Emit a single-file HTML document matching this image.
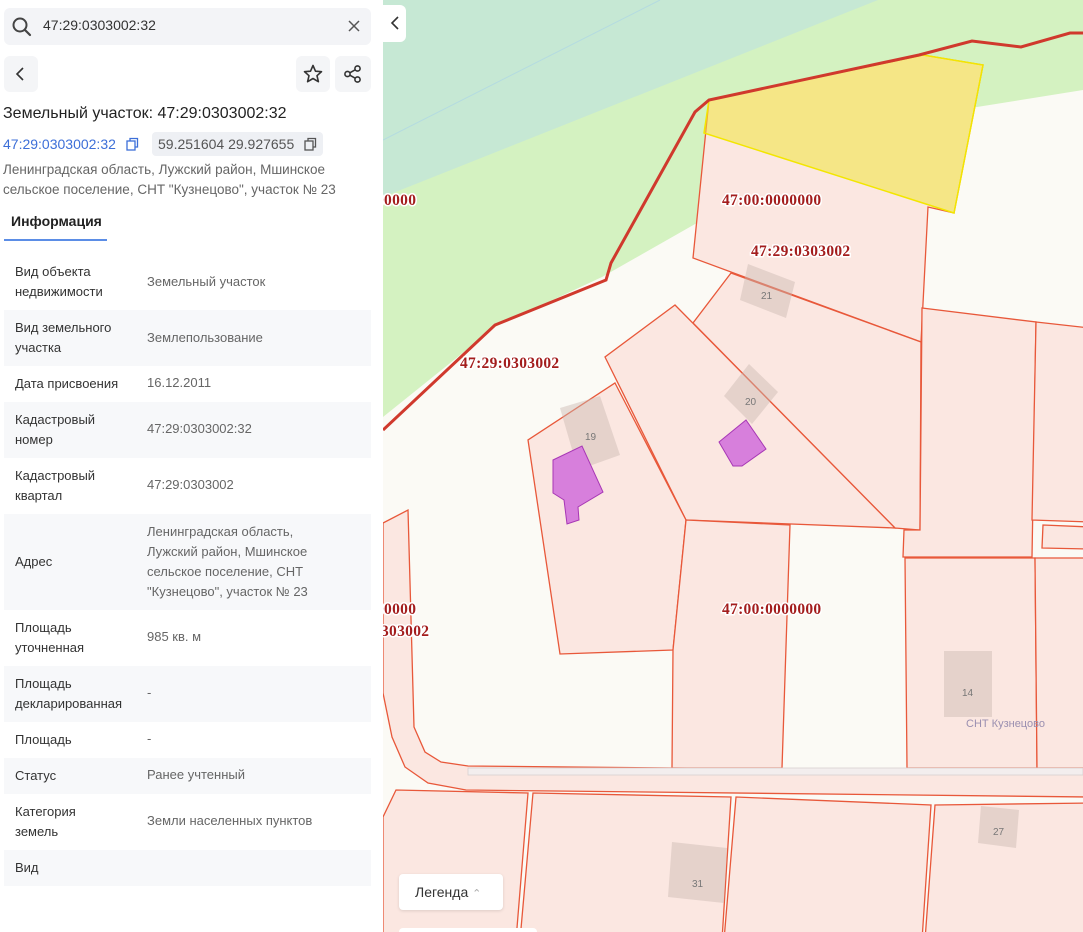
<!DOCTYPE html>
<html><head><meta charset="utf-8"><style>
*{margin:0;padding:0;box-sizing:border-box}
body{width:1083px;height:932px;overflow:hidden;font-family:"Liberation Sans",sans-serif;background:#fff;position:relative}
#panel{position:absolute;left:0;top:0;width:383px;height:932px;background:#fff}
.abs{position:absolute}
.btn{position:absolute;background:#f4f5f7;border-radius:6px}
.row{position:absolute;left:4px;width:367px;font-size:13px;line-height:20px}
.row.s{background:#f7f8fa}
.row .l{position:absolute;left:11px;color:#333;width:108px}
.row .v{position:absolute;left:143px;color:#666;width:185px}
#map{position:absolute;left:383px;top:0;width:700px;height:932px;overflow:hidden}
</style></head><body>
<div id="panel">
 <div class="abs" style="left:4px;top:8px;width:367px;height:37px;background:#f3f4f7;border-radius:6px"></div>
 <svg class="abs" style="left:11px;top:16px" width="22" height="22" viewBox="0 0 22 22"><circle cx="9" cy="9" r="6.5" fill="none" stroke="#444" stroke-width="2"/><line x1="14" y1="14" x2="19" y2="19" stroke="#444" stroke-width="2.2" stroke-linecap="round"/></svg>
 <div class="abs" style="left:43px;top:17px;font-size:14px;color:#333">47:29:0303002:32</div>
 <svg class="abs" style="left:347px;top:19px" width="14" height="14"><path d="M2 2L12 12M12 2L2 12" stroke="#555" stroke-width="1.5"/></svg>
 <div class="btn" style="left:4px;top:56px;width:34px;height:36px"></div>
 <svg class="abs" style="left:14px;top:66px" width="14" height="16"><path d="M9 2L3 8L9 14" fill="none" stroke="#333" stroke-width="1.6"/></svg>
 <div class="btn" style="left:296px;top:56px;width:34px;height:36px"></div>
 <svg class="abs" style="left:302px;top:63px" width="22" height="22" viewBox="0 0 22 22"><path d="M11 2.5L13.5 8.2L19.5 8.7L15 12.7L16.4 18.7L11 15.5L5.6 18.7L7 12.7L2.5 8.7L8.5 8.2Z" fill="none" stroke="#333" stroke-width="1.6" stroke-linejoin="round"/></svg>
 <div class="btn" style="left:335px;top:56px;width:36px;height:36px"></div>
 <svg class="abs" style="left:342px;top:63px" width="22" height="22" viewBox="0 0 22 22"><circle cx="15.5" cy="5.5" r="2.6" fill="none" stroke="#333" stroke-width="1.6"/><circle cx="5.5" cy="11" r="2.6" fill="none" stroke="#333" stroke-width="1.6"/><circle cx="15.5" cy="16.5" r="2.6" fill="none" stroke="#333" stroke-width="1.6"/><path d="M7.8 9.8L13.2 6.8M7.8 12.2L13.2 15.2" stroke="#333" stroke-width="1.6"/></svg>
 <div class="abs" style="left:3px;top:105px;font-size:16px;color:#222">Земельный участок: 47:29:0303002:32</div>
 <div class="abs" style="left:3px;top:136px;font-size:14px;color:#3d6fd8">47:29:0303002:32</div>
 <svg class="abs" style="left:125px;top:137px" width="14" height="14"><rect x="2" y="4" width="8" height="9" fill="none" stroke="#3d6fd8" stroke-width="1.3"/><path d="M5 4V1.5H12.5V10H10" fill="none" stroke="#3d6fd8" stroke-width="1.3"/></svg>
 <div class="abs" style="left:152px;top:132px;width:171px;height:24px;background:#eef0f4;border-radius:4px"></div>
 <div class="abs" style="left:158px;top:136px;font-size:14px;color:#555">59.251604 29.927655</div>
 <svg class="abs" style="left:303px;top:137px" width="14" height="14"><rect x="2" y="4" width="8" height="9" fill="none" stroke="#555" stroke-width="1.3"/><path d="M5 4V1.5H12.5V10H10" fill="none" stroke="#555" stroke-width="1.3"/></svg>
 <div class="abs" style="left:3px;top:160px;font-size:13.5px;color:#666;line-height:20px;width:370px">Ленинградская область, Лужский район, Мшинское сельское поселение, СНТ "Кузнецово", участок № 23</div>
 <div class="abs" style="left:11px;top:213px;font-size:14px;font-weight:bold;color:#222">Информация</div>
 <div class="abs" style="left:4px;top:239px;width:103px;height:2px;background:#5b8de6"></div>

 <div class="row" style="top:254px;height:56px"><div class="l" style="top:8px">Вид объекта недвижимости</div><div class="v" style="top:18px">Земельный участок</div></div>
 <div class="row s" style="top:310px;height:56px"><div class="l" style="top:8px">Вид земельного участка</div><div class="v" style="top:18px">Землепользование</div></div>
 <div class="row" style="top:366px;height:36px"><div class="l" style="top:8px;width:140px">Дата присвоения</div><div class="v" style="top:7px">16.12.2011</div></div>
 <div class="row s" style="top:402px;height:56px"><div class="l" style="top:8px">Кадастровый номер</div><div class="v" style="top:17px">47:29:0303002:32</div></div>
 <div class="row" style="top:458px;height:56px"><div class="l" style="top:8px">Кадастровый квартал</div><div class="v" style="top:17px">47:29:0303002</div></div>
 <div class="row s" style="top:514px;height:96px"><div class="l" style="top:38px">Адрес</div><div class="v" style="top:8px">Ленинградская область, Лужский район, Мшинское сельское поселение, СНТ "Кузнецово", участок № 23</div></div>
 <div class="row" style="top:610px;height:56px"><div class="l" style="top:8px">Площадь уточненная</div><div class="v" style="top:17px">985 кв. м</div></div>
 <div class="row s" style="top:666px;height:56px"><div class="l" style="top:8px;width:140px">Площадь декларированная</div><div class="v" style="top:17px">-</div></div>
 <div class="row" style="top:722px;height:36px"><div class="l" style="top:8px">Площадь</div><div class="v" style="top:7px">-</div></div>
 <div class="row s" style="top:758px;height:36px"><div class="l" style="top:8px">Статус</div><div class="v" style="top:7px">Ранее учтенный</div></div>
 <div class="row" style="top:794px;height:56px"><div class="l" style="top:8px;width:95px">Категория земель</div><div class="v" style="top:17px;width:220px">Земли населенных пунктов</div></div>
 <div class="row s" style="top:850px;height:36px"><div class="l" style="top:8px">Вид</div></div>
</div>

<div id="map">
<svg width="700" height="932" viewBox="383 0 700 932" style="position:absolute;left:0;top:0">
 <rect x="383" y="0" width="700" height="932" fill="#fbfaf5"/>
 <polygon points="383,0 1083,0 1083,90 977,107 878,120 602,277 495,327 383,417" fill="#d4f2c1"/>
 <polygon points="383,0 878,0 383,197" fill="#c6e8d4"/>
 <line x1="383" y1="140" x2="660" y2="0" stroke="#b4dbe0" stroke-width="1"/>
 <g fill="#fbe7e1" stroke="#e8583a" stroke-width="1.3">
  <polygon points="709,100 923,55 983,65 954,213 928,207 921,342 693,258"/>
  <polygon points="731,273 921,342 920,530 895,528 693,323"/>
  <polygon points="675,305 895,528 686,520 605,357"/>
  <polygon points="615,383 686,520 673,650 560,654 528,440"/>
  <polygon points="686,520 790,525 782,768 672,768 673,650"/>
  <polygon points="922,308 1036,322 1032,557 903,557 904,530 920,530"/>
  <polygon points="1036,322 1090,328 1090,522 1032,520"/>
  <polygon points="1043,525 1090,527 1090,549 1042,548"/>
  <polygon points="905,558 1035,558 1037,768 907,768"/>
  <polygon points="1035,558 1090,558 1090,768 1037,768"/>
  <polygon points="383,523 408,510 414,727 425,752 441,762 468,766 1090,772 1090,797 466,790 428,783 405,767 392,737 383,693"/>
  <polygon points="383,817 396,790 528,793 516,940 383,940"/>
  <polygon points="533,793 731,797 722,940 520,940"/>
  <polygon points="736,797 931,805 922,940 724,940"/>
  <polygon points="935,805 1090,803 1090,940 925,940"/>
 </g>
 <rect x="468" y="768" width="615" height="7" fill="#f3eeee" stroke="#d8d0d0" stroke-width="0.8"/>
 <polygon points="709,100 923,55 983,65 954,213 704,133" fill="#f0e63c" fill-opacity="0.55" stroke="#f3e600" stroke-width="1.5"/>
 <polyline points="383,430 495,325 606,280 611,263 695,112 709,100 919,55 972,41 1021,47 1070,33 1083,33" fill="none" stroke="#d0392d" stroke-width="3"/>
 <g fill="#c9b8b2" fill-opacity="0.45">
  <polygon points="748,264 795,282 786,318 740,300"/>
  <polygon points="749,364 778,392 752,424 724,396"/>
  <polygon points="560,408 600,396 620,455 578,470"/>
  <rect x="944" y="651" width="48" height="66"/>
  <polygon points="672,842 727,848 724,903 668,897"/>
  <polygon points="981,806 1019,810 1016,848 978,843"/>
 </g>
 <g font-family="Liberation Sans,sans-serif" font-size="10" fill="#777">
  <text x="761" y="299">21</text><text x="745" y="405">20</text><text x="585" y="440">19</text><text x="962" y="696">14</text><text x="692" y="887">31</text><text x="993" y="835">27</text>
 </g>
 <g fill="#d77fdc" stroke="#a737b5" stroke-width="1">
  <polygon points="553,460 582,446 603,492 578,507 579,520 567,524 564,500 553,493"/>
  <polygon points="719,442 746,420 766,449 742,466 733,466"/>
 </g>
 <g font-family="Liberation Serif,serif" font-size="15.5" font-weight="bold" fill="#a31d1d" stroke="#fff" stroke-width="3" paint-order="stroke" letter-spacing="0.3">
  <text x="722" y="205">47:00:0000000</text>
  <text x="751" y="256">47:29:0303002</text>
  <text x="460" y="368">47:29:0303002</text>
  <text x="376" y="205">00000</text>
  <text x="722" y="614">47:00:0000000</text>
  <text x="376" y="614">00000</text>
  <text x="381" y="636">303002</text>
 </g>
 <text x="966" y="727" font-family="Liberation Sans,sans-serif" font-size="11" fill="#9a8fb0">СНТ Кузнецово</text>
</svg>
 <div class="abs" style="left:0;top:5px;width:23px;height:37px;background:#fff;border-radius:0 6px 6px 0"></div>
 <svg class="abs" style="left:6px;top:15px" width="12" height="16"><path d="M9 2L3 8L9 14" fill="none" stroke="#333" stroke-width="1.6"/></svg>
 <div class="abs" style="left:16px;top:874px;width:104px;height:36px;background:#fff;border-radius:4px;box-shadow:0 1px 3px rgba(0,0,0,.12);font-size:14px;color:#333;padding:10px 0 0 16px">Легенда <span style="color:#aaa;font-size:11px">&#8963;</span></div>
 <div class="abs" style="left:16px;top:928px;width:138px;height:8px;background:#fff;border-radius:4px"></div>
</div>
</body></html>
